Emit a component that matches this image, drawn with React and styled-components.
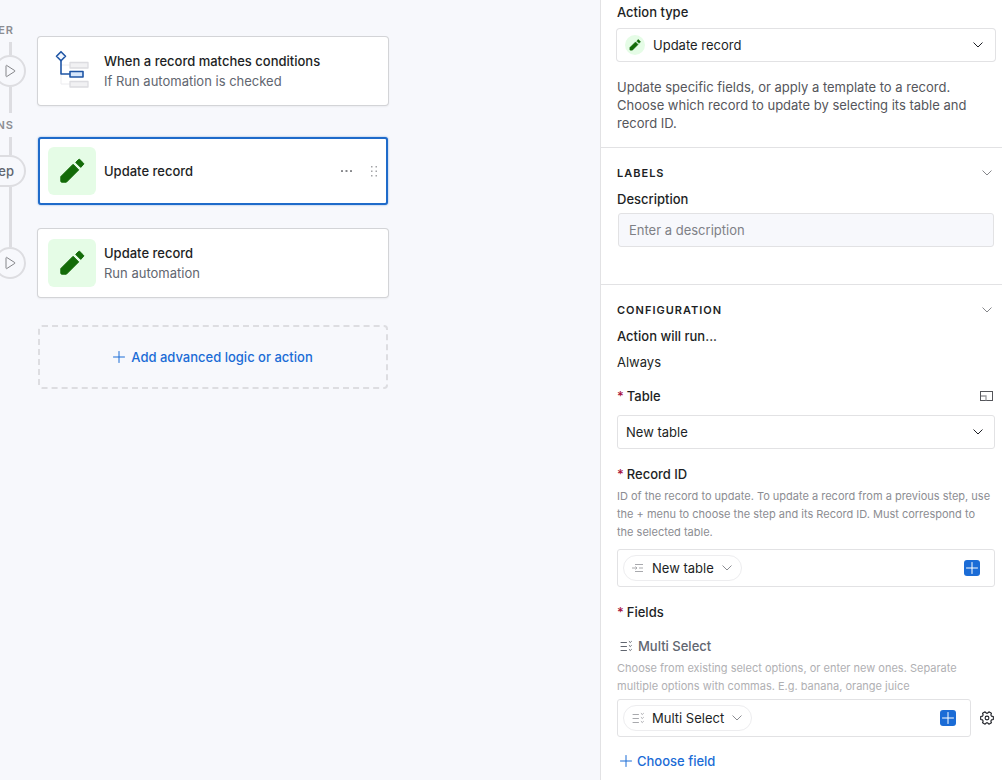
import React, { useState } from "react";
import styled, { createGlobalStyle, css } from "styled-components";

const c = {
  canvas: "#f7f8fc",
  text: "#1d1f25",
  soft: "#616670",
  muted: "#8c8d92",
  faint: "#b0b0b3",
  line: "#e2e2e4",
  rail: "#dddde1",
  blue: "#1b6cd6",
  link: "#1f6bca",
  green: "#136b08",
  greenBg: "#e5fce6",
  red: "#a8123c",
};

const GlobalStyle = createGlobalStyle`
  *, *::before, *::after { box-sizing: border-box; }
  body {
    margin: 0;
    background: ${c.canvas};
    color: ${c.text};
    font: 400 13px/18px Inter, "Liberation Sans", sans-serif;
  }
  button, input, select { font: inherit; color: inherit; }
  button { padding: 0; border: 0; background: none; cursor: pointer; }
  p, h2, h3 { margin: 0; font: inherit; }
  svg { display: block; flex: none; }
`;

const Page = styled.div`
  display: grid;
  grid-template-columns: minmax(0, 1fr) 402px;
  min-height: 100vh;
`;

/* ---------- canvas ---------- */

const Canvas = styled.main`
  display: flex;
  align-items: flex-start;
  gap: 12px;
  overflow: hidden;
`;

const Rail = styled.div`
  display: flex;
  flex: none;
  flex-direction: column;
  align-items: center;
  width: 32px;
  margin-left: -6px;
  padding-top: 18px;
`;

const RailLabel = styled.span`
  align-self: stretch;
  padding-right: 12px;
  color: ${c.muted};
  font-size: 11px;
  font-weight: 600;
  line-height: 24px;
  letter-spacing: 1px;
  text-align: right;
`;

const RailLine = styled.span`
  width: 3px;
  height: ${(p) => p.$length}px;
  background: ${c.rail};
`;

const RailButton = styled.button`
  display: flex;
  align-items: center;
  justify-content: center;
  width: 32px;
  height: 32px;
  border: 2px solid ${c.rail};
  border-radius: 16px;
  background: ${c.canvas};
  color: ${c.soft};
  ${(p) =>
    p.$pill &&
    css`
      justify-content: flex-end;
      padding-right: 10px;
      border-left: 0;
      border-radius: 0 16px 16px 0;
      font-weight: 500;
    `}
`;

const Steps = styled.div`
  display: flex;
  flex-direction: column;
  width: 350px;
  padding: 37px 0 24px;
`;

const StepCard = styled.article`
  display: flex;
  align-items: center;
  gap: 8px;
  min-height: 68px;
  margin-bottom: ${(p) => p.$after}px;
  padding: 8px;
  border: 2px solid ${(p) => (p.$selected ? c.link : "#fff")};
  border-radius: 3px;
  background: #fff;
  box-shadow: ${(p) =>
    p.$selected ? "0 0 2px rgba(31, 107, 202, 0.6)" : "0 0 0 1px #d3d4d7, 0 1px 2px 1px rgba(0, 0, 0, 0.05)"};
`;

const StepIcon = styled.span`
  display: flex;
  flex: none;
  align-items: center;
  justify-content: center;
  width: 48px;
  height: 48px;
  border-radius: 6px;
  background: ${(p) => (p.$tinted ? c.greenBg : "none")};
  color: ${c.green};
`;

const StepText = styled.div`
  flex: 1;
  min-width: 0;
  line-height: 20px;
`;

const StepTitle = styled.h3`
  font-weight: 500;
`;

const StepNote = styled.p`
  color: ${c.soft};
`;

const StepTools = styled.div`
  display: flex;
  align-items: center;
  gap: 18px;
  color: #85868a;
`;

const AddStep = styled.button`
  display: flex;
  align-items: center;
  justify-content: center;
  gap: 6px;
  height: 64px;
  border: 2px dashed ${c.rail};
  border-radius: 4px;
  color: ${c.blue};
  font-weight: 500;
`;

/* ---------- side panel ---------- */

const Panel = styled.aside`
  border-left: 1px solid ${c.line};
  background: #fff;
`;

const Section = styled.section`
  padding: ${(p) => (p.$first ? "3px" : "16px")} 7px ${(p) => p.$bottom}px 16px;
  & + & {
    border-top: 1px solid ${c.line};
  }
`;

const SectionHead = styled.div`
  display: flex;
  align-items: center;
  justify-content: space-between;
  margin-bottom: 8px;
  padding-right: 3px;
  color: #85868a;
`;

const SectionTitle = styled.h2`
  color: ${c.text};
  font-size: 11px;
  font-weight: 600;
  line-height: 18px;
  letter-spacing: 1px;
`;

const Block = styled.div`
  display: flex;
  flex-direction: column;
  gap: ${(p) => p.$gap}px;
  margin-top: ${(p) => p.$top ?? 16}px;
`;

const LabelRow = styled.div`
  display: flex;
  align-items: center;
  justify-content: space-between;
  padding-right: 2px;
`;

const Label = styled.label`
  font-weight: 500;
`;

const Star = styled.span`
  margin-right: 3px;
  color: ${c.red};
`;

const Description = styled.p`
  margin-top: 17px;
  color: #55565b;
`;

const Help = styled.p`
  padding-right: 2px;
  color: ${(p) => (p.$faint ? c.faint : c.muted)};
  font-size: 11px;
`;

const SelectWrap = styled.div`
  display: grid;
  align-items: center;
  & > * {
    grid-area: 1 / 1;
  }
  & > svg,
  & > span {
    pointer-events: none;
  }
  & > svg {
    justify-self: end;
    margin-right: 12px;
  }
`;

const SelectBox = styled.select`
  width: 100%;
  height: ${(p) => (p.$ring ? 32 : 34)}px;
  padding: 0 32px 0 ${(p) => (p.$ring ? 36 : 8)}px;
  border: ${(p) => (p.$ring ? "0" : `1px solid ${c.line}`)};
  border-radius: 3px;
  background: #fff;
  box-shadow: ${(p) => (p.$ring ? `0 0 0 1px ${c.line}` : "none")};
  appearance: none;
`;

const SelectBadge = styled.span`
  display: flex;
  align-items: center;
  justify-content: center;
  width: 20px;
  height: 20px;
  margin-left: 8px;
  border-radius: 50%;
  background: ${c.greenBg};
  color: ${c.green};
`;

const TextInput = styled.input`
  height: 34px;
  margin: 0 1px;
  padding: 0 10px;
  border: 1px solid ${c.line};
  border-radius: 3px;
  background: ${c.canvas};
  &::placeholder {
    color: #7e8086;
    opacity: 1;
  }
`;

const FieldRow = styled.div`
  display: flex;
  align-items: center;
  gap: 8px;
`;

const TokenField = styled.div`
  display: flex;
  flex: 1;
  align-items: center;
  min-width: 0;
  height: 38px;
  padding: 0 14px 0 5px;
  border: 1px solid ${c.line};
  border-radius: 3px;
`;

const TokenInput = styled.input`
  flex: 1;
  min-width: 0;
  height: 26px;
  border: 0;
  outline: 0;
  background: none;
`;

const Token = styled.button`
  display: flex;
  align-items: center;
  gap: 8px;
  height: 26px;
  padding: 0 9px 0 8px;
  border: 1px solid #ededef;
  border-radius: 13px;
  color: ${c.muted};
  & > svg:first-child {
    opacity: 0.75;
  }
`;

const TokenName = styled.span`
  color: ${c.text};
`;

const PlusButton = styled.button`
  width: 16px;
  height: 16px;
  border-radius: 3px;
  background: ${c.blue};
  color: #fff;
`;

const IconButton = styled.button`
  color: ${(p) => (p.$dark ? c.text : "inherit")};
`;

const FieldName = styled.h3`
  display: flex;
  align-items: center;
  gap: 6px;
  padding-left: 3px;
  color: ${c.soft};
  font-weight: 500;
`;

const ChooseField = styled.button`
  display: flex;
  align-items: center;
  gap: 5px;
  margin-top: 15px;
  padding-left: 3px;
  color: ${c.blue};
  font-weight: 500;
`;

/* ---------- icons ---------- */

const Pencil = ({ size = 26 }) => (
  <svg width={size} height={size} viewBox="-0.5 0 26 26" fill="currentColor" stroke="currentColor" strokeWidth="1" strokeLinejoin="round">
    <path d="M1.3 18.6 13.6 6.3 19.2 11.9 6.9 24.2H2.3a1 1 0 0 1-1-1z" />
    <path d="M16.2 4.4 19 1.6a1 1 0 0 1 1.4 0l3.6 3.6a1 1 0 0 1 0 1.4L21.2 9.4z" />
  </svg>
);

const Chevron = () => (
  <svg width="10" height="6" viewBox="0 0 10 6" fill="none" stroke="currentColor" strokeWidth="1" strokeLinecap="round" strokeLinejoin="round">
    <path d="M.8.8 5 5 9.2.8" />
  </svg>
);

const Play = () => (
  <svg width="12" height="14" viewBox="0 0 12 14" fill="none" stroke="#85868a" strokeWidth="1" strokeLinejoin="round">
    <path d="M2 1.9v10.2a.5.5 0 0 0 .8.4l8-5.1a.5.5 0 0 0 0-.8l-8-5.1a.5.5 0 0 0-.8.4z" />
  </svg>
);

const Plus = () => (
  <svg width="12" height="12" viewBox="0 0 12 12" fill="none" stroke="currentColor" strokeWidth="1" strokeLinecap="round">
    <path d="M6 .5v11M.5 6h11" />
  </svg>
);

const PlusTile = () => (
  <svg width="16" height="16" viewBox="0 0 16 16" fill="none" stroke="currentColor" strokeWidth="1" strokeLinecap="round">
    <path d="M8 2.5v11M2.5 8h11" />
  </svg>
);

const Branch = () => (
  <svg width="48" height="48" viewBox="0 0 48 48" fill="none" strokeLinejoin="round">
    <path d="M13 18h9M13 26v11h9" stroke="#ececef" />
    <g fill="#f1f1f3" stroke="#dcdce0" strokeWidth="1.3">
      <rect x="22" y="15.5" width="18" height="5.5" />
      <rect x="22" y="34.5" width="18" height="5.5" />
    </g>
    <g stroke="#1f55a5" strokeWidth="1.6">
      <path d="M13 4.7 17.5 9.2 13 13.7 8.5 9.2z" fill="#f2f7ff" />
      <path d="M13 13.7V27h9" />
      <rect x="22" y="24.5" width="13" height="5.5" fill="#d6e6fb" />
    </g>
  </svg>
);

const More = () => (
  <svg width="11" height="2" viewBox="0 0 11 2" fill="currentColor">
    <rect x="0" width="2" height="2" rx=".6" />
    <rect x="4.5" width="2" height="2" rx=".6" />
    <rect x="9" width="2" height="2" rx=".6" />
  </svg>
);

const Grip = () => (
  <svg width="8" height="11" viewBox="0 0 8 11" fill="currentColor" opacity=".75">
    {[0, 4.5, 9].map((y) => (
      <React.Fragment key={y}>
        <rect x="1" y={y} width="1.5" height="1.5" />
        <rect x="5.5" y={y} width="1.5" height="1.5" />
      </React.Fragment>
    ))}
  </svg>
);

const Expand = () => (
  <svg width="13" height="11" viewBox="0 0 13 11" fill="none">
    <rect x=".5" y=".5" width="12" height="9" stroke="#55565b" />
    <path d="M1 5h5v4.5" stroke="#9a9b9f" strokeWidth="1.3" />
  </svg>
);

const RecordLines = () => (
  <svg width="12" height="10" viewBox="0 0 12 10" fill="none" stroke="currentColor">
    <path d="M3 1.5h8M0 5h5M7 5h4M3 8.5h8M3.5 3.5 5 5 3.5 6.5" />
  </svg>
);

const MultiSelect = () => (
  <svg width="12" height="12" viewBox="0 0 12 12" fill="none" stroke="currentColor" strokeLinecap="round">
    <path d="M1 2.5h5.5M1 6.5h5.5M1 10.5h5.5" />
    <path d="M9.200 1.5l1.1 1 1.1-1M9.200 5.5l1.1 1 1.1-1M9.200 9.5l1.1 1 1.1-1" />
  </svg>
);

/* Outline of a cog with six blunt teeth: [angle from the tooth's middle, radius] */
const toothProfile = [[-22, 4.9], [-13, 6.5], [13, 6.5], [22, 4.9]];
const cogPoints = [0, 60, 120, 180, 240, 300]
  .flatMap((tooth) =>
    toothProfile.map(([offset, radius]) => {
      const angle = ((tooth + offset) * Math.PI) / 180;
      return `${(8 + radius * Math.cos(angle)).toFixed(2)},${(8 + radius * Math.sin(angle)).toFixed(2)}`;
    })
  )
  .join(" ");

const Gear = () => (
  <svg width="16" height="16" viewBox="0 0 16 16" fill="none" stroke="currentColor" strokeWidth="1.1" strokeLinejoin="round">
    <polygon points={cogPoints} />
    <circle cx="8" cy="8" r="1.9" />
  </svg>
);

/* ---------- page ---------- */

function Step({ title, note, icon, tinted, selected, after }) {
  return (
    <StepCard $selected={selected} $after={after}>
      <StepIcon $tinted={tinted}>{icon}</StepIcon>
      <StepText>
        <StepTitle>{title}</StepTitle>
        {note && <StepNote>{note}</StepNote>}
      </StepText>
      {selected && (
        <StepTools>
          <IconButton aria-label="More options"><More /></IconButton>
          <IconButton aria-label="Drag to reorder"><Grip /></IconButton>
        </StepTools>
      )}
    </StepCard>
  );
}

function TokenBox({ id, icon, name, labelledBy }) {
  const [value, setValue] = useState("");
  return (
    <TokenField>
      <Token type="button">
        {icon}
        <TokenName>{name}</TokenName>
        <Chevron />
      </Token>
      <TokenInput id={id} aria-labelledby={labelledBy} value={value} onChange={(e) => setValue(e.target.value)} />
      <PlusButton type="button" aria-label="Insert value"><PlusTile /></PlusButton>
    </TokenField>
  );
}

export default function App() {
  return (
    <>
      <GlobalStyle />
      <Page>
        <Canvas>
          <Rail>
            <RailLabel>ER</RailLabel>
            <RailLine $length={13} />
            <RailButton aria-label="Test trigger"><Play /></RailButton>
            <RailLine $length={26} />
            <RailLabel>NS</RailLabel>
            <RailLine $length={18} />
            <RailButton $pill>ep</RailButton>
            <RailLine $length={60} />
            <RailButton aria-label="Test action"><Play /></RailButton>
          </Rail>
          <Steps>
            <Step title="When a record matches conditions" note="If Run automation is checked" icon={<Branch />} after={32} />
            <Step title="Update record" icon={<Pencil />} tinted selected after={24} />
            <Step title="Update record" note="Run automation" icon={<Pencil />} tinted after={28} />
            <AddStep><Plus />Add advanced logic or action</AddStep>
          </Steps>
        </Canvas>

        <Panel>
          <Section $first $bottom={15}>
            <Block $top={0} $gap={8}>
              <Label htmlFor="action-type">Action type</Label>
              <SelectWrap>
                <SelectBox id="action-type" $ring>
                  <option>Update record</option>
                </SelectBox>
                <SelectBadge><Pencil size={12} /></SelectBadge>
                <Chevron />
              </SelectWrap>
            </Block>
            <Description>
              Update specific fields, or apply a template to a record. Choose which record to update by selecting its table and record ID.
            </Description>
          </Section>

          <Section $bottom={37}>
            <SectionHead>
              <SectionTitle>LABELS</SectionTitle>
              <IconButton aria-label="Collapse labels"><Chevron /></IconButton>
            </SectionHead>
            <Block $top={0} $gap={5}>
              <Label htmlFor="description">Description</Label>
              <TextInput id="description" placeholder="Enter a description" />
            </Block>
          </Section>

          <Section $bottom={8}>
            <SectionHead>
              <SectionTitle>CONFIGURATION</SectionTitle>
              <IconButton aria-label="Collapse configuration"><Chevron /></IconButton>
            </SectionHead>
            <Block $top={0} $gap={8}>
              <Label as="h3">Action will run...</Label>
              <p>Always</p>
            </Block>
            <Block $gap={10}>
              <LabelRow>
                <Label htmlFor="table"><Star>*</Star>Table</Label>
                <IconButton aria-label="Expand table"><Expand /></IconButton>
              </LabelRow>
              <SelectWrap>
                <SelectBox id="table">
                  <option>New table</option>
                </SelectBox>
                <Chevron />
              </SelectWrap>
            </Block>
            <Block $gap={4}>
              <Label htmlFor="record-id"><Star>*</Star>Record ID</Label>
              <Help>
                ID of the record to update. To update a record from a previous step, use the + menu to choose the step and its Record ID. Must correspond to the selected table.
              </Help>
            </Block>
            <Block $top={8} $gap={16}>
              <FieldRow>
                <TokenBox id="record-id" icon={<RecordLines />} name="New table" />
              </FieldRow>
              <Label as="h3"><Star>*</Star>Fields</Label>
            </Block>
            <Block $gap={4}>
              <FieldName id="multi-select"><MultiSelect />Multi Select</FieldName>
              <Help $faint>
                Choose from existing select options, or enter new ones. Separate multiple options with commas. E.g. banana, orange juice
              </Help>
              <FieldRow>
                <TokenBox labelledBy="multi-select" icon={<MultiSelect />} name="Multi Select" />
                <IconButton $dark aria-label="Field settings"><Gear /></IconButton>
              </FieldRow>
            </Block>
            <ChooseField type="button"><Plus />Choose field</ChooseField>
          </Section>
        </Panel>
      </Page>
    </>
  );
}
